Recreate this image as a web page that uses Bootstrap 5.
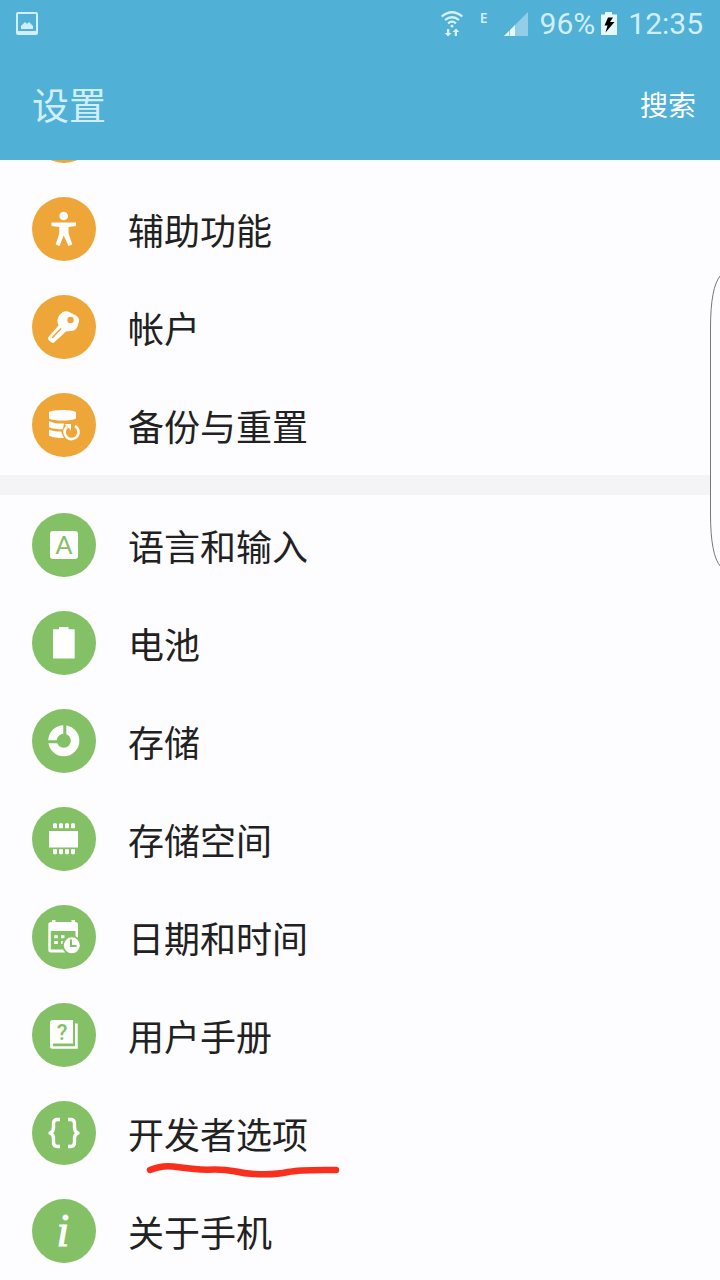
<!DOCTYPE html>
<html lang="zh-CN">
<head>
<meta charset="utf-8">
<meta name="viewport" content="width=device-width, initial-scale=1">
<title>设置</title>
<link href="https://cdn.jsdelivr.net/npm/bootstrap@5.3.0/dist/css/bootstrap.min.css" rel="stylesheet">
<style>
  body { background: #fdfcff; color: #212121; font-family: "Noto Sans CJK SC", sans-serif; }
  .top-area { background: #50b0d6; color: #d0effb; }
  .status-bar { height: 48px; padding: 0 17px 0 16px; font-family: Roboto, sans-serif; font-size: 30px; line-height: 48px; }
  .net-type { font-family: "Noto Sans", sans-serif; font-size: 14px; line-height: 20px; font-weight: 600; margin: 0 16px 0 17px; }
  .charge { margin: 0 11px 0 6px; }
  .app-bar { height: 112px; padding: 0 24px 0 32px; }
  .app-title { font-size: 37px; line-height: 48px; }
  .search-btn { font-size: 28px; line-height: 40px; color: #fff; }
  .set-row { height: 98px; padding: 0 32px; gap: 32px; font-size: 36px; line-height: 48px; }
  .peek-row { height: 20px; padding: 0 32px 17px; }
  .set-icon { width: 64px; height: 64px; fill: #fff; }
  .orange { --tone: #eea638; }
  .green { --tone: #84c065; }
  .tone-fill { fill: var(--tone); }
  .tone-line { stroke: var(--tone); fill: none; }
  .white-line { stroke: #fff; fill: none; }
  .group-gap { height: 20px; margin: 1px 0; background: #f4f3f6; }
  .red-mark { left: 146px; bottom: 4px; }
  .edge-handle { top: 272px; right: 0; }
</style>
</head>
<body>
<div class="position-relative min-vh-100 overflow-hidden">
  <header class="top-area">
    <div class="status-bar d-flex align-items-center">
      <svg width="22" height="24" viewBox="0 0 22 24" fill="none" aria-hidden="true">
        <path fill="#d0effb" fill-rule="evenodd" d="M2 0h18a2 2 0 0 1 2 2v19a2 2 0 0 1-2 2H2a2 2 0 0 1-2-2V2a2 2 0 0 1 2-2zm0 2v17h18V2z"/>
        <path fill="#d0effb" d="M5 17v-3l4-4 2 2 2-2 4 4v3z"/>
      </svg>
      <svg class="ms-auto" width="22" height="26" viewBox="0 0 22 26" fill="none" stroke="#d8f2fc" stroke-width="2.200" aria-hidden="true">
        <path d="M.7 5.500Q11-3 21.300 5.500M4 9Q11 3.500 18 9M7 12.300Q11 9 15 12.300"/>
        <circle cx="11" cy="15" r="1.500" fill="#d8f2fc" stroke="none"/>
        <path fill="#d8f2fc" stroke="none" d="M6 18h2.300v4h2.200L7 25.500 3.700 22H6zM13.700 25v-4h-2.200L15 17.500l3.300 3.500H16v4z"/>
      </svg>
      <span class="net-type align-self-start mt-2">E</span>
      <svg width="24" height="24" viewBox="0 0 24 24" aria-hidden="true">
        <path fill="#92cee7" d="M0 24 24 0v24z"/><path fill="#e6f7fd" d="M0 24l5-5v5zM6 24v-6l5-5v11z"/>
      </svg>
      <span class="ms-2 ps-1">96%</span>
      <svg class="charge" width="16" height="24" viewBox="0 0 16 24" aria-hidden="true">
        <path fill="#e6f7fd" d="M0 2.500h4V0h7v2.500h5V23H0z"/><path d="M7 5.500h5l-3 4.500h4.500L4.500 20.500l2-7H3.500z"/>
      </svg>
      <span>12:35</span>
    </div>
    <div class="app-bar d-flex align-items-center justify-content-between">
      <h1 class="app-title fw-normal m-0">设置</h1>
      <button type="button" class="search-btn btn p-0 border-0">搜索</button>
    </div>
  </header>

  <main>
    <div class="peek-row orange d-flex align-items-end overflow-hidden" aria-hidden="true">
      <svg class="set-icon flex-shrink-0" viewBox="0 0 64 64"><circle class="tone-fill" cx="32" cy="32" r="32"/></svg>
    </div>
    <nav class="orange" aria-label="个人">
      <a href="#" class="set-row d-flex align-items-center text-reset text-decoration-none">
        <svg class="set-icon flex-shrink-0" viewBox="0 0 64 64" aria-hidden="true"><circle class="tone-fill" cx="32" cy="32" r="32"/>
          <circle cx="31.700" cy="19" r="4.300"/><path d="M19.500 25.500h24.500v3.500l-7.500 1v6.500L40.300 47.500 36.500 49 31.700 38.500 27.500 49l-3.800-1.500L27.300 36.500v-6.500l-7.800-1z"/></svg>
        <span>辅助功能</span>
      </a>
      <a href="#" class="set-row d-flex align-items-center text-reset text-decoration-none">
        <svg class="set-icon flex-shrink-0" viewBox="0 0 64 64" aria-hidden="true"><circle class="tone-fill" cx="32" cy="32" r="32"/>
          <path d="M28 19.500Q31.500 15 36 16.500L44 20.500Q47.500 22.500 47 26.500L45.500 31.500Q43.500 36 38.500 36L34 36.500 22 47.500Q20.500 48.500 19 47L16.500 45Q15.500 43.500 16.500 42L26.500 30.500 25.500 27Q25 23 28 19.500z"/>
          <circle class="tone-fill" cx="38.500" cy="25" r="3.200"/><path class="tone-line" stroke-width="1.500" d="M20 43 29 33.500"/></svg>
        <span>帐户</span>
      </a>
      <a href="#" class="set-row d-flex align-items-center text-reset text-decoration-none">
        <svg class="set-icon flex-shrink-0" viewBox="0 0 64 64" aria-hidden="true"><circle class="tone-fill" cx="32" cy="32" r="32"/>
          <path d="M17 19c5-2.800 22-2.800 27 0v6.500c-5 2.800-22 2.800-27 0zM17 28c4 2.300 8 2.600 15 2.600L31 36.300c-5 0-11-.4-14-2.300zM17 36.500c3 1.600 7 2 12 2L32 45c-5 0-12-.3-15-2.500z"/>
          <circle class="tone-fill" cx="39.500" cy="39" r="9.300"/>
          <path class="white-line" stroke-width="2.600" d="M43 33A7 7 0 1 1 35 33.800"/><path d="M32.500 31h6.500v6.500z"/></svg>
        <span>备份与重置</span>
      </a>
    </nav>
    <div class="group-gap"></div>
    <nav class="green" aria-label="系统">
      <a href="#" class="set-row d-flex align-items-center text-reset text-decoration-none">
        <svg class="set-icon flex-shrink-0" viewBox="0 0 64 64" aria-hidden="true"><circle class="tone-fill" cx="32" cy="32" r="32"/>
          <rect x="18" y="18" width="28" height="28" rx="3"/><text class="tone-fill" x="32" y="41" text-anchor="middle" font-family="Lato, sans-serif" font-size="25">A</text></svg>
        <span>语言和输入</span>
      </a>
      <a href="#" class="set-row d-flex align-items-center text-reset text-decoration-none">
        <svg class="set-icon flex-shrink-0" viewBox="0 0 64 64" aria-hidden="true"><circle class="tone-fill" cx="32" cy="32" r="32"/>
          <path d="M21 18.300h6V16h9.500v2.300h6.200V47.500H21z"/></svg>
        <span>电池</span>
      </a>
      <a href="#" class="set-row d-flex align-items-center text-reset text-decoration-none">
        <svg class="set-icon flex-shrink-0" viewBox="0 0 64 64" aria-hidden="true"><circle class="tone-fill" cx="32" cy="32" r="32"/>
          <circle class="white-line" cx="31.800" cy="31.800" r="11.300" stroke-width="8.500"/><path class="tone-line" stroke-width="3" d="M32.800 15v12M15 32.800h12"/></svg>
        <span>存储</span>
      </a>
      <a href="#" class="set-row d-flex align-items-center text-reset text-decoration-none">
        <svg class="set-icon flex-shrink-0" viewBox="0 0 64 64" aria-hidden="true"><circle class="tone-fill" cx="32" cy="32" r="32"/>
          <path d="M17 24h29v16.500H17z"/><path d="M21 21.300v-4l.8-1h2.400l.8 1v4zM27 21.300v-4l.8-1h2.400l.8 1v4zM33 21.300v-4l.8-1h2.400l.8 1v4zM39 21.300v-4l.8-1h2.400l.8 1v4zM21 42.300h4v4l-.8 1h-2.400l-.8-1zM27 42.300h4v4l-.8 1h-2.400l-.8-1zM33 42.300h4v4l-.8 1h-2.400l-.8-1zM39 42.300h4v4l-.8 1h-2.400l-.8-1z"/></svg>
        <span>存储空间</span>
      </a>
      <a href="#" class="set-row d-flex align-items-center text-reset text-decoration-none">
        <svg class="set-icon flex-shrink-0" viewBox="0 0 64 64" aria-hidden="true"><circle class="tone-fill" cx="32" cy="32" r="32"/>
          <path fill-rule="evenodd" d="M19 17h1v-2h3.500v2H39.500v-2H43v2h.500q2.500 0 2.500 2.500V47.500H19q-2.700 0-2.700-2.500V19.500Q16.300 17 19 17zM18.800 26v18.500h24.700V26z"/>
          <path d="M22.300 30.300h3.500v3h-3.500zM29 30.300h3.500v3H29zM22.300 36h3.500v3h-3.500zM29 36h3.500v3H29z"/>
          <circle class="tone-fill" cx="39.800" cy="40.300" r="9.800"/><circle cx="39.800" cy="40.300" r="8"/><path class="tone-line" stroke-width="2" d="M39 34.500v6.500h5.500"/></svg>
        <span>日期和时间</span>
      </a>
      <a href="#" class="set-row d-flex align-items-center text-reset text-decoration-none">
        <svg class="set-icon flex-shrink-0" viewBox="0 0 64 64" aria-hidden="true"><circle class="tone-fill" cx="32" cy="32" r="32"/>
          <path d="M20.500 17H41v23.500H21v2.800h22V20.500h2.700v25.300H20.500Q18 45.800 18 43.300V19.500Q18 17 20.500 17z"/>
          <text class="tone-fill" x="30" y="37" text-anchor="middle" font-family="Roboto, sans-serif" font-weight="500" font-size="22">?</text></svg>
        <span>用户手册</span>
      </a>
      <a href="#" class="set-row position-relative d-flex align-items-center text-reset text-decoration-none">
        <svg class="set-icon flex-shrink-0" viewBox="0 0 64 64" aria-hidden="true"><circle class="tone-fill" cx="32" cy="32" r="32"/>
          <path class="white-line" stroke-width="3.400" stroke-linejoin="round" d="M28 18.500h-2.500q-4 0-4 4V27q0 3.500-3.500 5 3.500 1.500 3.500 5v4.500q0 4 4 4H28M36 18.500h2.500q4 0 4 4V27q0 3.500 3.500 5-3.500 1.500-3.500 5v4.500q0 4-4 4H36"/></svg>
        <span>开发者选项</span>
        <svg class="red-mark position-absolute" width="196" height="16" viewBox="0 0 196 16" fill="none" stroke="#f92f1d" stroke-linecap="round" stroke-linejoin="round" aria-hidden="true">
          <path stroke-width="6.500" d="M4 8Q16 3 27 4.500 48 7.500 62 7.800 76 7 90 9.500 98 11.500 108 12 130 13 142 10 154 7.500 190 8"/>
        </svg>
      </a>
      <a href="#" class="set-row d-flex align-items-center text-reset text-decoration-none">
        <svg class="set-icon flex-shrink-0" viewBox="0 0 64 64" aria-hidden="true"><circle class="tone-fill" cx="32" cy="32" r="32"/>
          <text x="31" y="47" text-anchor="middle" font-family="Liberation Serif, serif" font-style="italic" font-size="46" stroke="#fff" stroke-width="1">i</text></svg>
        <span>关于手机</span>
      </a>
    </nav>
  </main>

  <svg class="edge-handle position-absolute" width="10" height="298" viewBox="0 0 10 298" aria-hidden="true">
    <path fill="#fdfcff" stroke="#777" d="M10.500 3.500Q.5 15 .5 56V242Q.5 283 10.500 294.500"/>
  </svg>
</div>
</body>
</html>
